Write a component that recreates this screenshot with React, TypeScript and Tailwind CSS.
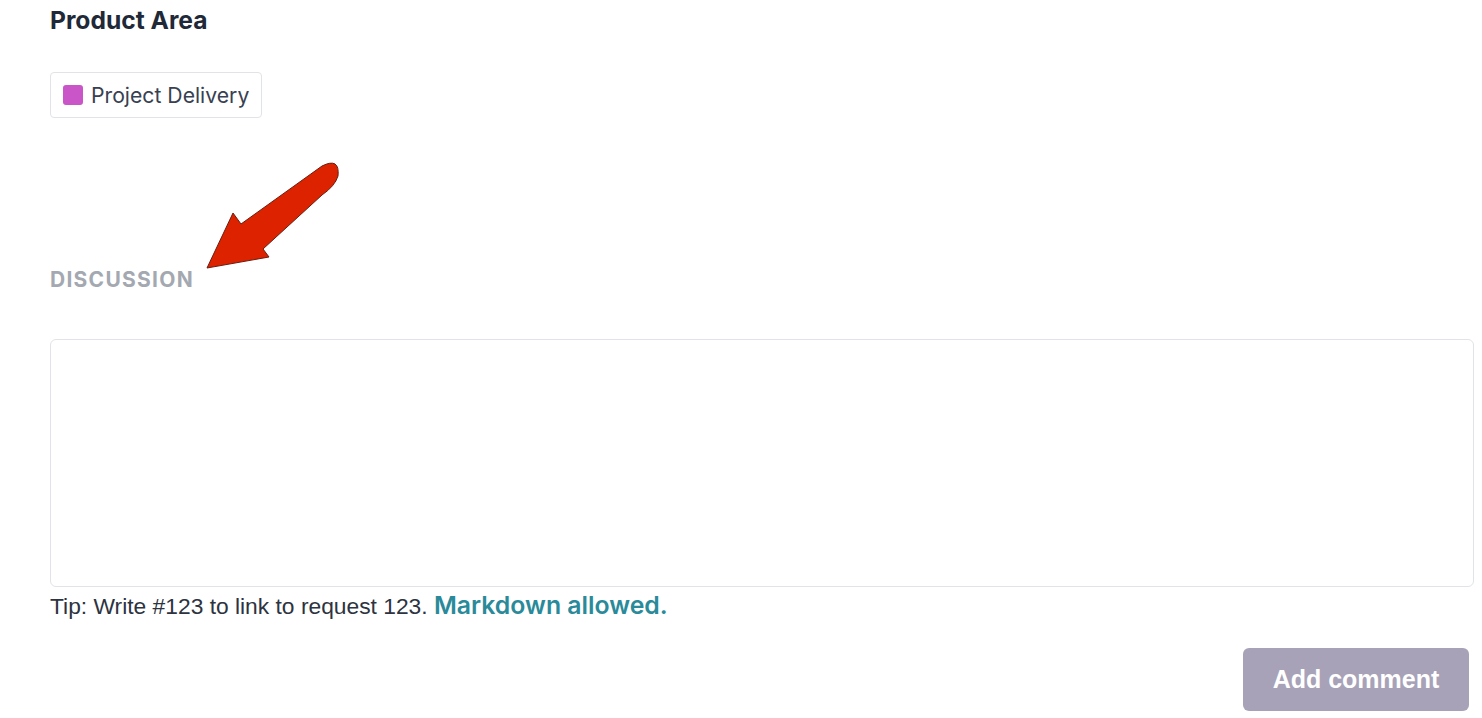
import React from 'react';

const Arrow: React.FC = () => (
  <svg className="pointer-events-none absolute left-0 top-0" width="400" height="300" viewBox="0 0 400 300">
    <path
      d="M207,268 L233,213 L241,224 L322,166 Q340,157 338,176 Q335,186 322,195 L263,249 L269,257 Z"
      fill="#dd2200"
      stroke="#6b1d10"
      strokeWidth="1"
      strokeLinejoin="round"
    />
  </svg>
);

const App: React.FC = () => {
  return (
    <div className="relative min-h-screen w-full bg-white pl-[50px] pr-[8px] font-['Inter',sans-serif]">
      <Arrow />
      <div className="pt-[7px]">
        <h2 className="text-[24.6px] font-bold leading-[26px] text-[#1f2937]">Product Area</h2>
        <div className="mt-[39px] inline-flex h-[46px] items-center gap-[8px] rounded-[4px] border border-[#e2e3e8] px-[12px]">
          <span className="h-[20px] w-[20px] rounded-[3px] bg-[#c955c9]" />
          <span className="text-[21.2px] leading-[24px] text-[#374151]">Project Delivery</span>
        </div>
      </div>

      <div className="mt-[150px] text-[21px] font-bold uppercase leading-[24px] tracking-[0.06em] text-[#a3a8b1]">
        Discussion
      </div>

      <textarea className="mt-[47px] block h-[248px] w-full resize-none rounded-[6px] border border-[#e2e3e8] outline-none" />

      <p className="mt-[6px] font-['Liberation_Sans',Arial,sans-serif] text-[22.8px] leading-[24px] text-[#2d3340]">
        Tip: Write #123 to link to request 123.{' '}
        <a className="font-['Inter',sans-serif] text-[24.8px] font-semibold text-[#2a8a9a]">Markdown allowed.</a>
      </p>

      <div className="mt-[30px] flex justify-end pr-[5px]">
        <button className="h-[63px] w-[226px] rounded-[6px] bg-[#a7a2b8] font-['Liberation_Sans',Arial,sans-serif] text-[25px] font-bold text-white">
          Add comment
        </button>
      </div>
    </div>
  );
};

export default App;
